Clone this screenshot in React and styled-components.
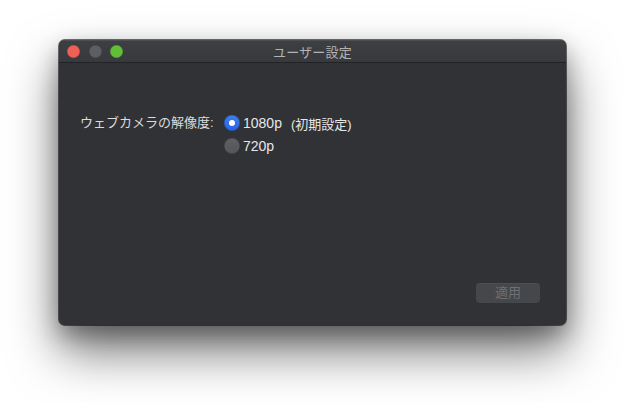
import React from "react";
import styled, { createGlobalStyle } from "styled-components";

const Global = createGlobalStyle`
  html, body { margin: 0; padding: 0; background: #ffffff; }
  body { font-family: "Liberation Sans", "Noto Sans CJK JP", sans-serif; }
`;

const Stage = styled.div`
  width: 625px;
  height: 403px;
  padding-top: 40px;
  box-sizing: border-box;
  display: flex;
  justify-content: center;
  align-items: flex-start;
  background: #ffffff;
`;

const Window = styled.div`
  width: 507px;
  height: 285px;
  border-radius: 6px;
  background: #313236;
  display: flex;
  flex-direction: column;
  overflow: hidden;
  box-shadow: 0 0 0 1px rgba(0, 0, 0, 0.55), 0 26px 50px rgba(0, 0, 0, 0.55),
    0 10px 22px rgba(0, 0, 0, 0.3);
`;

const TitleBar = styled.div`
  height: 22px;
  flex: none;
  display: flex;
  align-items: center;
  padding: 0 8px;
  position: relative;
  background: linear-gradient(#3e3f43, #38393c);
  border-bottom: 1px solid #222326;
  box-shadow: inset 0 1px 0 rgba(255, 255, 255, 0.08);
`;

const Lights = styled.div`
  display: flex;
  gap: 8.5px;
  position: relative;
  z-index: 1;
`;

const Light = styled.span`
  width: 13px;
  height: 13px;
  border-radius: 50%;
  background: ${(p) => p.$color};
  box-shadow: inset 0 0 0 0.5px rgba(0, 0, 0, 0.25);
`;

const Title = styled.div`
  position: absolute;
  inset: 0;
  display: flex;
  align-items: center;
  justify-content: center;
  font-size: 13px;
  color: #b3b3b5;
  letter-spacing: 0.2px;
`;

const Body = styled.div`
  flex: 1;
  display: flex;
  flex-direction: column;
  padding: 50px 26px 22px 21px;
`;

const Form = styled.div`
  display: grid;
  grid-template-columns: 144px auto;
  align-items: start;
`;

const Label = styled.div`
  font-size: 13px;
  line-height: 20px;
  color: #dcdcde;
`;

const Options = styled.div`
  display: flex;
  flex-direction: column;
  gap: 3px;
`;

const Option = styled.label`
  display: flex;
  align-items: center;
  gap: 3px;
  height: 20px;
  font-size: 14px;
  color: #e6e6e8;
`;

const Radio = styled.span`
  width: 16px;
  height: 16px;
  border-radius: 50%;
  display: flex;
  align-items: center;
  justify-content: center;
  background: ${(p) =>
    p.$checked
      ? "linear-gradient(#3d7ef0, #2a62dc)"
      : "linear-gradient(#5f6064, #545559)"};
  box-shadow: inset 0 0 0 0.5px rgba(0, 0, 0, 0.3);
  &::after {
    content: "";
    width: 6px;
    height: 6px;
    border-radius: 50%;
    background: #ffffff;
    display: ${(p) => (p.$checked ? "block" : "none")};
  }
`;

const Note = styled.span`
  margin-left: 6px;
  font-size: 13px;
`;

const Footer = styled.div`
  margin-top: auto;
  display: flex;
  justify-content: flex-end;
`;

const Button = styled.button`
  width: 64px;
  height: 20px;
  border: none;
  border-radius: 4px;
  background: #46474b;
  color: #6f7073;
  font-family: inherit;
  font-size: 13px;
  line-height: 20px;
  padding: 0;
  box-shadow: inset 0 1px 0 rgba(255, 255, 255, 0.04);
`;

export default function App() {
  return (
    <>
      <Global />
      <Stage>
        <Window>
          <TitleBar>
            <Lights>
              <Light $color="#ee5f57" />
              <Light $color="#5d5e62" />
              <Light $color="#5fc038" />
            </Lights>
            <Title>ユーザー設定</Title>
          </TitleBar>
          <Body>
            <Form>
              <Label>ウェブカメラの解像度:</Label>
              <Options>
                <Option>
                  <Radio $checked />
                  1080p<Note>(初期設定)</Note>
                </Option>
                <Option>
                  <Radio />
                  720p
                </Option>
              </Options>
            </Form>
            <Footer>
              <Button disabled>適用</Button>
            </Footer>
          </Body>
        </Window>
      </Stage>
    </>
  );
}
